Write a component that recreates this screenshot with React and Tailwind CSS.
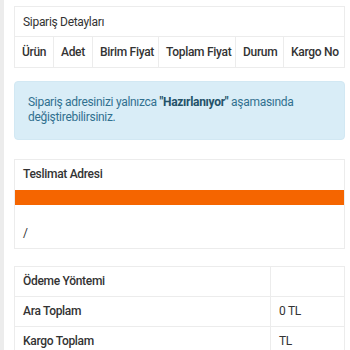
export default function App() {
    const headers = [
        ['Ürün', 'w-[39px]'],
        ['Adet', 'w-[39px]'],
        ['Birim Fiyat', 'w-[66px]'],
        ['Toplam Fiyat', 'w-[77px]'],
        ['Durum', 'w-[48px]'],
        ['Kargo No', ''],
    ];

    return (
        <div
            className="flex h-[350px] w-[350px] overflow-hidden bg-white text-[12px] tracking-[-0.3px] text-[#333]"
            style={{ fontFamily: 'Roboto, "Open Sans", sans-serif' }}
        >
            {/* left gutter */}
            <div className="w-[4px] shrink-0 bg-[#ececec]" />

            <div className="flex min-w-0 flex-1 flex-col pl-[10px] pr-[5px] pt-[6px]">
                {/* Sipariş Detayları */}
                <table className="w-full table-fixed border-collapse border border-[#ececec] bg-white">
                    <colgroup>
                        {headers.map(([h, w]) => (
                            <col key={h} className={w} />
                        ))}
                    </colgroup>
                    <tbody>
                        <tr className="h-[30px]">
                            <td colSpan={6} className="px-[8px]">Sipariş Detayları</td>
                        </tr>
                        <tr className="h-[31px] border-t border-[#ececec] font-medium">
                            {headers.map(([h]) => (
                                <td key={h} className="border-r border-[#ececec] pl-[7px] whitespace-nowrap last:border-r-0">
                                    {h}
                                </td>
                            ))}
                        </tr>
                    </tbody>
                </table>

                {/* Info alert */}
                <div className="mt-[13px] rounded-[4px] border border-[#d2e8f3] bg-[#d9edf7] px-[13px] pt-[13px] pb-[14px] leading-[15px] text-[#31708f]">
                    <span>Sipariş adresinizi yalnızca </span>
                    <span className="font-bold text-[#245269]">"Hazırlanıyor"</span>
                    <span> aşamasında değiştirebilirsiniz.</span>
                </div>

                {/* Teslimat Adresi */}
                <div className="mt-[19px] border border-[#ececec]">
                    <div className="flex h-[30px] items-center px-[8px] pb-[2px] font-medium">Teslimat Adresi</div>
                    <div className="h-[15px] bg-[#f56500]" />
                    <div className="flex h-[43px] items-end px-[8px] pb-[6px]">/</div>
                </div>

                {/* Ödeme */}
                <table className="mt-[17px] w-full table-fixed border-collapse border border-[#ececec]">
                    <colgroup>
                        <col />
                        <col className="w-[74px]" />
                    </colgroup>
                    <tbody>
                        <tr className="h-[30px] border-b border-[#ececec]">
                            <td className="border-r border-[#ececec] px-[8px] pb-[2px] font-medium">Ödeme Yöntemi</td>
                            <td className="px-[8px]"></td>
                        </tr>
                        <tr className="h-[30px] border-b border-[#ececec]">
                            <td className="border-r border-[#ececec] px-[8px] pb-[2px] font-medium">Ara Toplam</td>
                            <td className="px-[8px] pb-[2px]">0 TL</td>
                        </tr>
                        <tr className="h-[30px]">
                            <td className="border-r border-[#ececec] px-[8px] pb-[2px] font-medium">Kargo Toplam</td>
                            <td className="px-[8px] pb-[2px]">TL</td>
                        </tr>
                    </tbody>
                </table>
            </div>
        </div>
    );
}
